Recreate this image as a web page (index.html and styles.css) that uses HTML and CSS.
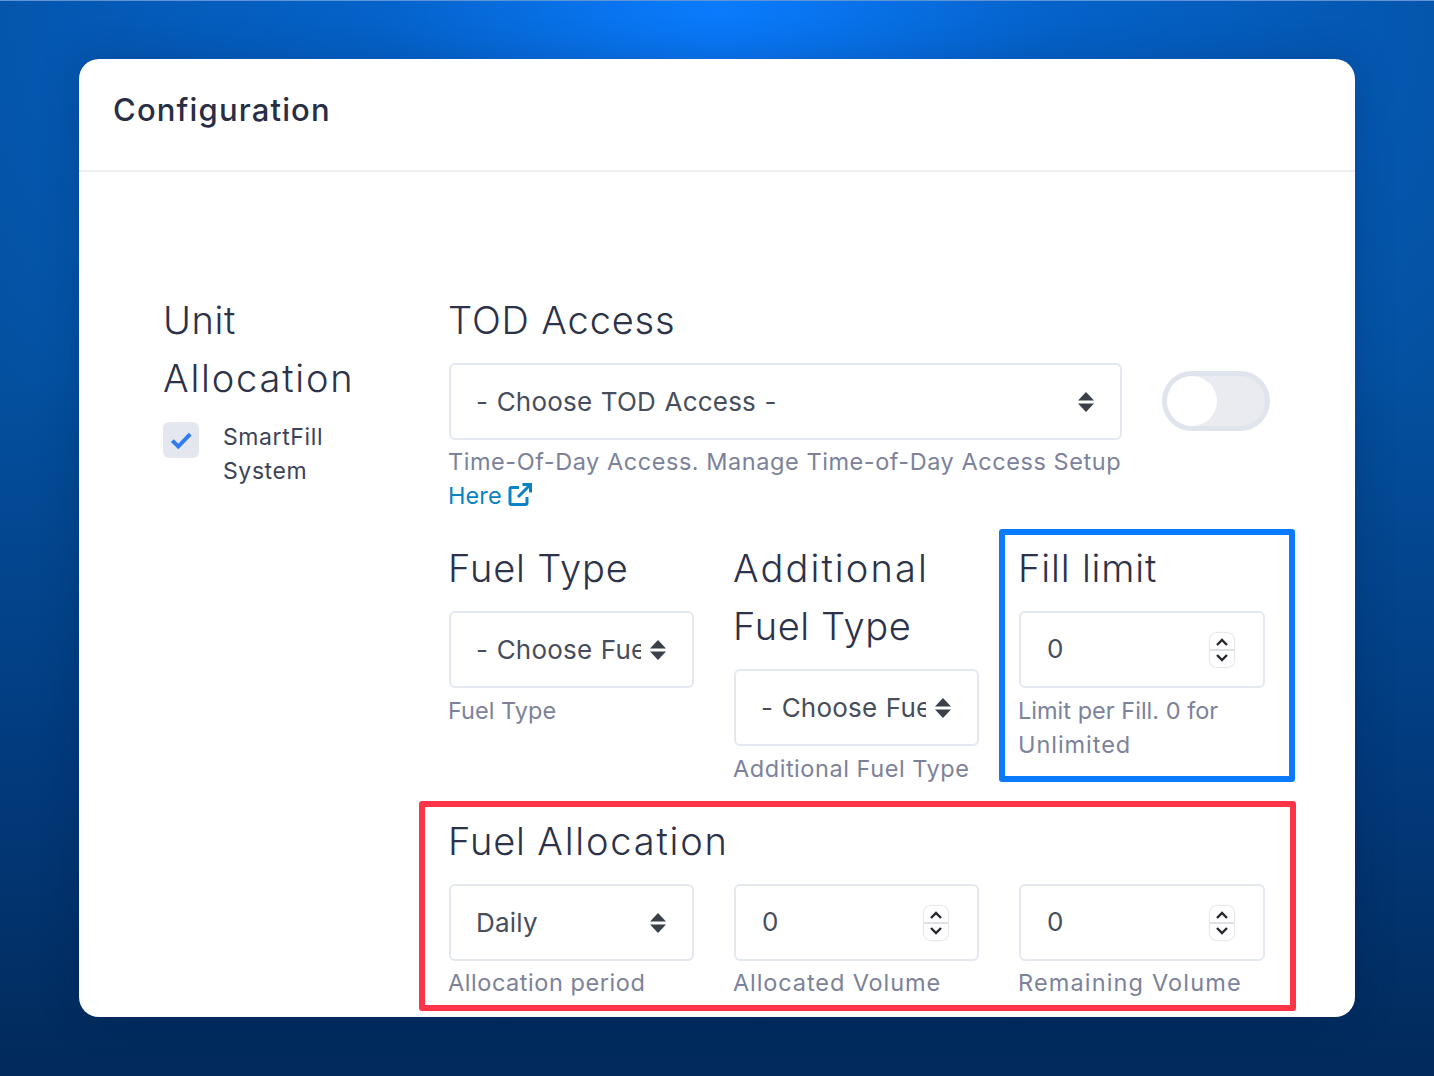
FILE: index.html
```html
<!DOCTYPE html>
<html lang="en">
<head>
<meta charset="utf-8">
<title>Configuration</title>
<link rel="stylesheet" href="styles.css">
</head>
<body>
<main class="card">
  <header class="card-head"><h1 class="card-title">Configuration</h1></header>
  <div class="card-body">
    <aside class="side">
      <h2 class="label label-unit">Unit <span class="wide">Allocation</span></h2>
      <div class="check-row">
        <span class="check"><svg viewBox="0 0 24 24" width="26" height="26"><path d="M4 12.500l5.500 5.500L20.500 6.500" fill="none" stroke="#2f7bf5" stroke-width="3.600"/></svg></span>
        <span class="check-text">SmartFill System</span>
      </div>
    </aside>
    <div class="main">
      <section class="tod">
        <h2 class="label">TOD Access</h2>
        <div class="tod-row">
          <div class="select"><span class="select-text">- Choose TOD Access -</span><svg class="arrows" viewBox="0 0 16 20" width="16" height="20"><path d="M8 0l8 8.500H0zM0 11.500h16L8 20z" fill="#3a4149"/></svg></div>
          <div class="toggle"><span class="knob"></span></div>
        </div>
        <p class="help help-tod">Time-Of-Day Access. Manage Time-of-Day Access Setup <a class="link" href="#">Here <svg viewBox="0 0 24 24" width="24" height="24"><path d="M19 14v6a1.500 1.500 0 0 1-1.500 1.500h-14A1.500 1.500 0 0 1 2 20V6a1.500 1.500 0 0 1 1.500-1.500H11M10 14L22 2M14.500 1.500H22.500V9.500" fill="none" stroke="#0b82c4" stroke-width="3"/></svg></a></p>
      </section>
      <section class="fields">
        <div class="field">
          <h2 class="label">Fuel Type</h2>
          <div class="select"><span class="select-text">- Choose Fuel Type -</span><svg class="arrows" viewBox="0 0 16 20" width="16" height="20"><path d="M8 0l8 8.500H0zM0 11.500h16L8 20z" fill="#3a4149"/></svg></div>
          <p class="help help-tight">Fuel Type</p>
        </div>
        <div class="field">
          <h2 class="label label-add"><span class="wider">Additional</span> Fuel Type</h2>
          <div class="select"><span class="select-text">- Choose Fuel Type -</span><svg class="arrows" viewBox="0 0 16 20" width="16" height="20"><path d="M8 0l8 8.500H0zM0 11.500h16L8 20z" fill="#3a4149"/></svg></div>
          <p class="help">Additional Fuel Type</p>
        </div>
        <div class="field mark-blue">
          <h2 class="label">Fill limit</h2>
          <div class="number"><span class="num">0</span><span class="spin"><svg viewBox="0 0 24 34" width="24" height="34"><path d="M7 12l5-5 5 5M7 22l5 5 5-5" fill="none" stroke="#25282c" stroke-width="2.400"/></svg></span></div>
          <p class="help help-tight">Limit per Fill. 0 for <span class="help-word">Unlimited</span></p>
        </div>
      </section>
      <section class="alloc mark-red">
        <h2 class="label">Fuel <span class="wide">Allocation</span></h2>
        <div class="alloc-grid">
          <div>
            <div class="select"><span class="select-text">Daily</span><svg class="arrows" viewBox="0 0 16 20" width="16" height="20"><path d="M8 0l8 8.500H0zM0 11.500h16L8 20z" fill="#3a4149"/></svg></div>
            <p class="help">Allocation period</p>
          </div>
          <div>
            <div class="number"><span class="num">0</span><span class="spin"><svg viewBox="0 0 24 34" width="24" height="34"><path d="M7 12l5-5 5 5M7 22l5 5 5-5" fill="none" stroke="#25282c" stroke-width="2.400"/></svg></span></div>
            <p class="help help-loose">Allocated Volume</p>
          </div>
          <div>
            <div class="number"><span class="num">0</span><span class="spin"><svg viewBox="0 0 24 34" width="24" height="34"><path d="M7 12l5-5 5 5M7 22l5 5 5-5" fill="none" stroke="#25282c" stroke-width="2.400"/></svg></span></div>
            <p class="help help-loosest">Remaining Volume</p>
          </div>
        </div>
      </section>
    </div>
  </div>
</main>
</body>
</html>
```
FILE: styles.css
```css
* { box-sizing: border-box; }
html, body { margin: 0; height: 1076px; overflow: hidden; }
body {
  padding: 58px 79px;
  border-top: 1px solid #5f95d6;
  font-family: Inter, "Open Sans", sans-serif;
  background:
    radial-gradient(ellipse 900px 620px at 50% 0, #0a7cff 0%, #0562c9 38%, rgba(4,80,165,0) 100%),
    linear-gradient(180deg, #04509f 0%, #04509f 35%, #023a7c 72%, #022a5a 100%);
}
.card {
  height: 958px;
  background: #fff;
  border-radius: 20px;
  overflow: hidden;
  box-shadow: 0 0 40px rgba(0, 20, 60, .22);
}
.card-head {
  height: 113px;
  padding: 32px 34px 0;
  border-bottom: 2px solid #eff0f4;
}
.card-title { margin: 0; font-size: 31px; line-height: 38px; font-weight: 500; color: #282e45; letter-spacing: 1.15px; }
.card-body { display: flex; padding: 119px 90px 0 84px; }
.side { width: 286px; padding-right: 50px; flex: none; }
.main { flex: 1; min-width: 0; }
.label { margin: 0 0 14px; font-size: 38px; line-height: 58px; font-weight: 300; color: #2b3249; letter-spacing: .85px; }
.label-unit, .label-add { letter-spacing: .6px; }
.wide { letter-spacing: 1.8px; }
.wider { letter-spacing: 2.100px; }
.main .label, .main .help { margin-left: -1px; }
.check-row { display: flex; gap: 24px; margin-top: -2px; }
.check { width: 36px; height: 36px; flex: none; margin-top: 3px; border-radius: 6px; background: #e4e7ef; display: flex; align-items: center; justify-content: center; }
.check-text { font-size: 23px; line-height: 34px; color: #3c4358; letter-spacing: .6px; padding-top: 1px; }
.tod-row { display: flex; gap: 40px; align-items: center; margin-right: -5px; }
.tod-row .select { flex: 1; }
.select, .number {
  height: 77px;
  border: 2px solid #e4e8ef;
  border-radius: 6px;
  display: flex;
  align-items: center;
  justify-content: space-between;
  padding: 0 26px 0 25px;
  font-size: 26px;
  letter-spacing: .2px;
  word-spacing: 1px;
  color: #474d5a;
  background: #fff;
}
.select-text { flex: 1; min-width: 0; overflow: hidden; white-space: nowrap; margin-right: 9px; }
.arrows { flex: none; }
.number { padding: 0 29px 0 26px; }
.num { padding-bottom: 2px; }
.spin { width: 24px; height: 34px; border-radius: 7px; background: linear-gradient(#fff 48%, #dcdfe3 48%, #dcdfe3 52%, #fff 52%); box-shadow: 0 0 2px rgba(0,0,0,.35); display: block; }
.spin svg { display: block; }
.toggle { width: 108px; height: 60px; flex: none; margin-top: -2px; border: 5px solid #e0e4ec; border-radius: 30px; background: #e9ebf1; }
.knob { display: block; width: 50px; height: 50px; border-radius: 50%; background: #fff; }
.help { margin: 5px 0 0; font-size: 23.500px; line-height: 34px; color: #7c8299; font-weight: 400; letter-spacing: .55px; }
.help-tod { max-width: 680px; }
.help-tight { letter-spacing: .02px; }
.help-word { letter-spacing: .95px; }
.help-loose { letter-spacing: .9px; }
.help-loosest { letter-spacing: 1.15px; }
.fields .help { margin-top: 6px; }
.link { color: #0b82c4; text-decoration: none; white-space: nowrap; display: inline-block; letter-spacing: .1px; }
.link svg { vertical-align: -3px; }
.fields, .alloc-grid { display: grid; grid-template-columns: minmax(0, 245fr) minmax(0, 245fr) minmax(0, 246fr); column-gap: 40px; }
.fields { margin-top: 26px; }
.field { position: relative; }
.alloc { position: relative; margin-top: 26px; }
.mark-blue::after, .mark-red::after { content: ""; position: absolute; border-radius: 3px; pointer-events: none; }
.mark-blue::after { inset: -10px -30px 4px -20px; border: 6px solid #0a7bff; }
.mark-red::after { inset: -11px -31px -11px -30px; border: 6px solid #ff3547; }
```
